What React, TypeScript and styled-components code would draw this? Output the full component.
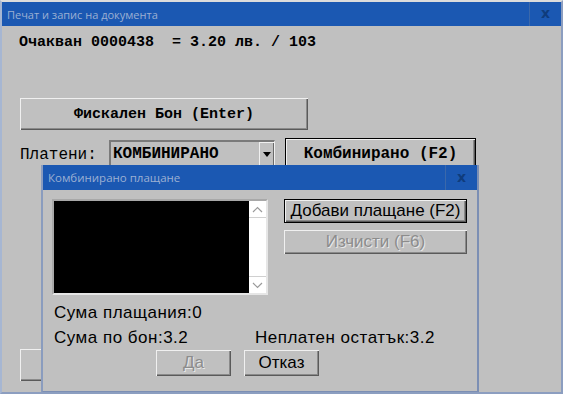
import React from 'react';
import styled, { createGlobalStyle } from 'styled-components';

const GlobalStyle = createGlobalStyle`
  html, body {
    margin: 0;
    padding: 0;
    background: #c0c0c0;
  }
  * {
    box-sizing: border-box;
  }
`;

const Frame = styled.div`
  position: relative;
  width: 563px;
  height: 394px;
  overflow: hidden;
  background: #c0c0c0;
  border-top: 2px solid #dcdcdc;
  border-left: 2px solid #a6b6d2;
  border-right: 2px solid #8c9ec0;
  border-bottom: 2px solid #8c9ec0;
  display: flex;
  flex-direction: column;
`;

const TitleBar = styled.div<{ $height: number }>`
  flex-shrink: 0;
  height: ${p => p.$height}px;
  background: #1b58b2;
  display: flex;
  align-items: stretch;
`;

const TitleText = styled.div<{ $size: number }>`
  flex: 1;
  display: flex;
  align-items: center;
  padding-left: 5px;
  font-family: "Open Sans", "Noto Sans", sans-serif;
  font-size: ${p => p.$size}px;
  color: #9bb0d2;
  white-space: nowrap;
`;

const CloseBox = styled.div<{ $width: number }>`
  width: ${p => p.$width}px;
  border-left: 1px solid #3b68aa;
  display: flex;
  align-items: center;
  justify-content: center;
  font-family: "DejaVu Sans", sans-serif;
  font-weight: bold;
  font-size: 14px;
  color: #0f3c7c;
  padding-bottom: 2px;
`;

const Body = styled.div`
  flex: 1;
  padding: 8px 0 0 16px;
  display: flex;
  flex-direction: column;
`;

const MonoLine = styled.div`
  font-family: "Liberation Mono", "Courier New", monospace;
  font-weight: bold;
  font-size: 15px;
  line-height: 18px;
  color: #000;
  white-space: pre;
  margin-left: 1px;
`;

const RaisedButton = styled.div<{ $w: number; $h: number; $mono?: boolean; $size?: number; $focused?: boolean; $disabled?: boolean }>`
  width: ${p => p.$w}px;
  height: ${p => p.$h}px;
  flex-shrink: 0;
  background: #c0c0c0;
  border: ${p => (p.$focused ? '1px solid #000' : 'none')};
  box-shadow: inset 1px 1px #f0f0f0, inset -1px -1px #5a5a5a, inset -2px -2px #8a8a8a;
  display: flex;
  align-items: center;
  justify-content: center;
  font-family: ${p => (p.$mono ? '"Liberation Mono", "Courier New", monospace' : '"Liberation Sans", Arial, sans-serif')};
  font-weight: ${p => (p.$mono ? 'bold' : 'normal')};
  font-size: ${p => p.$size ?? 15}px;
  color: ${p => (p.$disabled ? '#8c8c8c' : '#000')};
  text-shadow: ${p => (p.$disabled ? '1px 1px #e8e8e8' : 'none')};
  white-space: pre;
`;

const FiscalButton = styled(RaisedButton)`
  margin-top: 46px;
  margin-left: 2px;
`;

const PaidRow = styled.div`
  display: flex;
  align-items: flex-start;
  margin-top: 8px;
  margin-left: 2px;
`;

const PaidLabel = styled.div`
  font-family: "Liberation Mono", "Courier New", monospace;
  font-size: 16px;
  color: #000;
  width: 89px;
  padding-top: 8px;
  white-space: pre;
`;

const Combo = styled.div`
  width: 166px;
  height: 27px;
  margin-top: 2px;
  border-top: 2px solid #7a7a7a;
  border-left: 2px solid #7a7a7a;
  border-right: 1px solid #f0f0f0;
  border-bottom: 1px solid #f0f0f0;
  display: flex;
  align-items: stretch;
`;

const ComboValue = styled.div`
  flex: 1;
  display: flex;
  align-items: center;
  padding-left: 2px;
  font-family: "Liberation Mono", "Courier New", monospace;
  font-weight: bold;
  font-size: 16px;
  color: #000;
`;

const ComboArrow = styled.div`
  width: 15px;
  background: #c0c0c0;
  box-shadow: inset 1px 1px #f0f0f0, inset -1px -1px #6a6a6a;
  display: flex;
  align-items: center;
  justify-content: center;
`;

const ComboCombiButton = styled(RaisedButton)`
  margin-left: 10px;
`;

const HiddenButton = styled(RaisedButton)`
  margin-top: 179px;
  margin-left: 2px;
`;

const Dialog = styled.div`
  position: absolute;
  left: 39px;
  top: 163px;
  width: 438px;
  height: 228px;
  background: #c0c0c0;
  border-left: 2px solid #8a9cbe;
  border-right: 2px solid #7c8fb4;
  border-bottom: 2px solid #7c8fb4;
  display: flex;
  flex-direction: column;
`;

const DialogBody = styled.div`
  flex: 1;
  padding: 9px 0 0 9px;
  display: flex;
  flex-direction: column;
`;

const TopRow = styled.div`
  display: flex;
  align-items: flex-start;
  gap: 16px;
`;

const ListBox = styled.div`
  width: 216px;
  height: 96px;
  border: 2px solid #a8a8a8;
  border-right-color: #e6e6e6;
  border-bottom-color: #e6e6e6;
  display: flex;
`;

const ListArea = styled.div`
  flex: 1;
  background: #000;
`;

const ScrollBar = styled.div`
  width: 17px;
  background: #fff;
  display: flex;
  flex-direction: column;
  justify-content: space-between;
`;

const ScrollButton = styled.div<{ $down?: boolean }>`
  height: 17px;
  display: flex;
  align-items: center;
  justify-content: center;
  border-${p => (p.$down ? 'top' : 'bottom')}: 1px solid #d0d0d0;
`;

const SideButtons = styled.div`
  display: flex;
  flex-direction: column;
  gap: 7px;
`;

const InfoLine = styled.div`
  font-family: "Liberation Sans", Arial, sans-serif;
  font-size: 17px;
  letter-spacing: 0.5px;
  line-height: 25px;
  color: #000;
  white-space: nowrap;
  margin-left: 2px;
`;

const FirstInfo = styled(InfoLine)`
  margin-top: 5px;
`;

const InfoGrid = styled.div`
  display: grid;
  grid-template-columns: 201px auto;
`;

const ActionRow = styled.div`
  display: flex;
  gap: 13px;
  margin-left: 104px;
`;

const Chevron: React.FC<{ down?: boolean }> = ({ down }) => (
  <svg width="11" height="7" viewBox="0 0 11 7">
    <polyline
      points={down ? '1,1 5.5,5.5 10,1' : '1,6 5.5,1.5 10,6'}
      fill="none"
      stroke="#9a9a9a"
      strokeWidth="1.2"
    />
  </svg>
);

export default function App() {
  return (
    <>
      <GlobalStyle />
      <Frame>
        <TitleBar $height={24}>
          <TitleText $size={11}>Печат и запис на документа</TitleText>
          <CloseBox $width={32}>x</CloseBox>
        </TitleBar>
        <Body>
          <MonoLine>Очакван 0000438  = 3.20 лв. / 103</MonoLine>
          <FiscalButton $w={288} $h={32} $mono $size={15}>Фискален Бон (Enter)</FiscalButton>
          <PaidRow>
            <PaidLabel>Платени:</PaidLabel>
            <Combo>
              <ComboValue>КОМБИНИРАНО</ComboValue>
              <ComboArrow>
                <svg width="8" height="5" viewBox="0 0 8 5">
                  <polygon points="0,0 8,0 4,5" fill="#000" />
                </svg>
              </ComboArrow>
            </Combo>
            <ComboCombiButton $w={191} $h={32} $mono $size={16} $focused>Комбинирано (F2)</ComboCombiButton>
          </PaidRow>
          <HiddenButton $w={120} $h={32} />
        </Body>

        <Dialog>
          <TitleBar $height={25}>
            <TitleText $size={11.5}>Комбинирано плащане</TitleText>
            <CloseBox $width={32}>x</CloseBox>
          </TitleBar>
          <DialogBody>
            <TopRow>
              <ListBox>
                <ListArea />
                <ScrollBar>
                  <ScrollButton><Chevron /></ScrollButton>
                  <ScrollButton $down><Chevron down /></ScrollButton>
                </ScrollBar>
              </ListBox>
              <SideButtons>
                <RaisedButton $w={183} $h={24} $size={17} $focused>Добави плащане (F2)</RaisedButton>
                <RaisedButton $w={183} $h={24} $size={17} $disabled>Изчисти (F6)</RaisedButton>
              </SideButtons>
            </TopRow>
            <FirstInfo>Сума плащания:0</FirstInfo>
            <InfoGrid>
              <InfoLine>Сума по бон:3.2</InfoLine>
              <InfoLine>Неплатен остатък:3.2</InfoLine>
            </InfoGrid>
            <ActionRow>
              <RaisedButton $w={75} $h={26} $size={17} $disabled>Да</RaisedButton>
              <RaisedButton $w={75} $h={26} $size={17}>Отказ</RaisedButton>
            </ActionRow>
          </DialogBody>
        </Dialog>
      </Frame>
    </>
  );
}
